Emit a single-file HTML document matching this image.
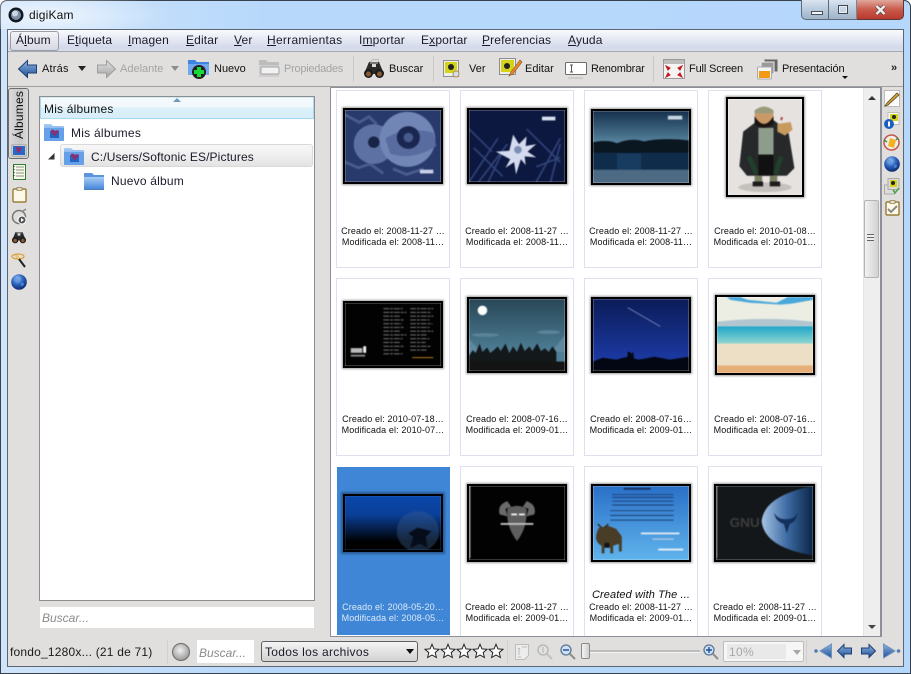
<!DOCTYPE html>
<html><head><meta charset="utf-8"><style>
html,body{margin:0;padding:0;background:#fff}
#w{position:relative;width:911px;height:674px;overflow:hidden;font-family:"Liberation Sans",sans-serif;color:#111;background:linear-gradient(90deg,#cfe4fa 0,#b7d8fb 30%,#b5d7fb 100%);border-radius:7px 7px 0 0;box-shadow:inset 0 0 0 1px #39424c}
.a{position:absolute}
.t{position:absolute;white-space:nowrap}
.m{font-size:12px;top:33px;letter-spacing:.15px;color:#1b1b2a}
.b{font-size:11px;top:63px;letter-spacing:0;color:#111}
.g{color:#a4a4a4}
.sep{position:absolute;width:1px;background:#cbc8c4}
.c{position:absolute;width:112px;background:#fff;border:1px solid #dfdfef}
.th{position:absolute;box-sizing:border-box;border:2px solid #000;box-shadow:0 0 2px 1px #a0a0a0;overflow:hidden}
.th svg{display:block;width:100%;height:100%;filter:blur(.6px)}
.l{position:absolute;width:114px;text-align:center;font-size:9px;line-height:11px;white-space:nowrap;color:#111;letter-spacing:.12px}
svg.i{position:absolute;overflow:visible}
</style></head><body><div id="w">
<svg width="0" height="0" style="position:absolute"><defs>
<linearGradient id="fb" x1="0" y1="0" x2="0" y2="1"><stop offset="0" stop-color="#a9cdf5"/><stop offset="1" stop-color="#3f82d8"/></linearGradient>
<linearGradient id="fg" x1="0" y1="0" x2="0" y2="1"><stop offset="0" stop-color="#e2e2e2"/><stop offset="1" stop-color="#a5a5a5"/></linearGradient>
<linearGradient id="nb" x1="0" y1="0" x2="0" y2="1"><stop offset="0" stop-color="#8fb4e0"/><stop offset="1" stop-color="#1e4f98"/></linearGradient>
<radialGradient id="gl" cx=".4" cy=".3" r=".7"><stop offset="0" stop-color="#a6cbf5"/><stop offset=".5" stop-color="#2c66c0"/><stop offset="1" stop-color="#0b2a70"/></radialGradient>
<radialGradient id="bl" cx=".45" cy=".4" r=".65"><stop offset="0" stop-color="#f1f1f1"/><stop offset="1" stop-color="#909090"/></radialGradient>
<symbol id="folderp" viewBox="0 0 22 20"><path d="M1 2h7l2 2h10q1 0 1 1v13q0 1-1 1H2q-1 0-1-1z" fill="url(#fb)"/><path d="M1 6h20v12q0 1-1 1H2q-1 0-1-1z" fill="#66a0e8"/><path d="M7 9h9v7H7z" fill="#1f65c4"/><path d="M8 8c2-1 3 0 4 1 1-1 3-1 4 0-1 2-3 3-4 6-1-2-4-3-4-7z" fill="#8c2f6f"/></symbol>
<symbol id="gstar" viewBox="0 0 16 16"><path d="M8 1.300l2 4.600 5 .4-3.800 3.300 1.200 4.900L8 11.900 3.600 14.500l1.200-4.900L1 6.300l5-.4z" fill="#fff" stroke="#222" stroke-width="1"/></symbol>
<symbol id="bino" viewBox="0 0 22 20"><path d="M6 3h3v5h4V3h3l5 12H1z" fill="#2a2a2a"/><circle cx="5.500" cy="14.500" r="4.500" fill="#1c1c1c"/><circle cx="16.500" cy="14.500" r="4.500" fill="#1c1c1c"/><circle cx="5.500" cy="15" r="2.500" fill="#8a5a30"/><circle cx="16.500" cy="15" r="2.500" fill="#8a5a30"/><path d="M7 3h8v2H7z" fill="#777"/></symbol>
<symbol id="globe" viewBox="0 0 16 16"><circle cx="8" cy="8" r="7.800" fill="url(#gl)"/><path d="M4 4c2-1 4 0 4 2S5 8 4 7zM10 9c2-1 3 0 3 1s-2 3-3 2z" fill="#5f93db" opacity=".7"/></symbol>
</defs></svg>

<!-- title bar -->
<div class="a" style="left:0;top:0;width:300px;height:29px;background:radial-gradient(ellipse 120px 26px at 50px 16px,rgba(255,255,255,.65),rgba(255,255,255,0))"></div>
<svg class="i" style="left:8px;top:7px" width="16" height="16"><circle cx="8" cy="8" r="7.500" fill="#12181f"/><circle cx="8" cy="8" r="5" fill="#7d8fa6"/><circle cx="7" cy="6.500" r="3" fill="#c9d6e6"/></svg>
<div class="t" style="left:29px;top:8px;font-size:12px;letter-spacing:.2px;color:#111">digiKam</div>
<!-- window buttons -->
<div class="a" style="left:801px;top:0;width:28px;height:20px;box-sizing:border-box;border:1px solid #5e6a78;border-top:0;border-radius:0 0 0 5px;background:linear-gradient(#d9e4f0,#b9cadc 50%,#9fb2c7)"></div>
<div class="a" style="left:811px;top:11px;width:10px;height:2px;background:#f4f6f8;border:1px solid #47505c"></div>
<div class="a" style="left:829px;top:0;width:28px;height:20px;box-sizing:border-box;border-bottom:1px solid #5e6a78;border-right:1px solid #7a8694;background:linear-gradient(#d9e4f0,#b9cadc 50%,#9fb2c7)"></div>
<div class="a" style="left:838px;top:5px;width:8px;height:7px;border:1px solid #3f4752;background:#c9d6e3;box-shadow:inset 0 0 0 1px #e8eef4"></div>
<div class="a" style="left:857px;top:0;width:47px;height:20px;box-sizing:border-box;border:1px solid #5b3a36;border-top:0;border-left:0;border-radius:0 0 5px 0;background:linear-gradient(#dfa89d,#c95a4c 50%,#b83a2d)"></div>
<svg class="i" style="left:875px;top:5px" width="11" height="10"><path d="M1.500 1l8 8M9.500 1l-8 8" stroke="#5a4442" stroke-width="3.800"/><path d="M1.500 1l8 8M9.500 1l-8 8" stroke="#f0f0f0" stroke-width="2.400"/></svg>

<!-- client -->
<div class="a" style="left:7px;top:29px;width:897px;height:638px;background:#e0dfdd;border:1px solid #5b6670;box-sizing:border-box"></div>
<div class="a" style="left:8px;top:30px;width:895px;height:21px;background:linear-gradient(#f9fafd,#d3d9ea 85%,#d9deeb);border-bottom:1px solid #a4a8b2"></div>
<div class="a" style="left:10px;top:31px;width:47px;height:18px;border:1px solid #9a9ca8;border-radius:3px;background:linear-gradient(#f3f4f8,#d6d8e2)"></div>
<div class="t m" style="left:16px">Á<u>l</u>bum</div>
<div class="t m" style="left:67px">E<u>t</u>iqueta</div>
<div class="t m" style="left:128px"><u>I</u>magen</div>
<div class="t m" style="left:186px"><u>E</u>ditar</div>
<div class="t m" style="left:234px"><u>V</u>er</div>
<div class="t m" style="left:267px;letter-spacing:.28px"><u>H</u>erramientas</div>
<div class="t m" style="left:359px">I<u>m</u>portar</div>
<div class="t m" style="left:421px">E<u>x</u>portar</div>
<div class="t m" style="left:482px"><u>P</u>referencias</div>
<div class="t m" style="left:568px"><u>A</u>yuda</div>

<!-- toolbar -->
<div class="a" style="left:8px;top:86px;width:895px;height:1px;background:#9f9f9f"></div>
<svg class="i" style="left:18px;top:60px" width="20" height="18"><path d="M9.500.5v4.500h9v8h-9v4.500L.5 9z" fill="url(#nb)" stroke="#1e3f73"/></svg>
<div class="t b" style="left:42px;letter-spacing:.2px">Atrás</div>
<svg class="i" style="left:78px;top:66px" width="8" height="5"><path d="M0 0h8L4 5z" fill="#222"/></svg>
<svg class="i" style="left:96px;top:60px" width="20" height="18"><path d="M10.500.5v4.500h-9v8h9v4.500l9-8.500z" fill="url(#fg)" stroke="#9c9c9c"/></svg>
<div class="t b g" style="left:120px">Adelante</div>
<svg class="i" style="left:171px;top:66px" width="8" height="5"><path d="M0 0h8L4 5z" fill="#8d8d8d"/></svg>
<svg class="i" style="left:188px;top:59px" width="22" height="20"><path d="M0 1h7l2 2h12v13H0z" fill="#3f84e0"/><path d="M0 5h21v11H0z" fill="#6fa8ef"/><circle cx="11" cy="13" r="7" fill="#222"/><path d="M9 8h4v3h3v4h-3v3H9v-3H6v-4h3z" fill="#19d936"/></svg>
<div class="t b" style="left:214px">Nuevo</div>
<svg class="i" style="left:258px;top:59px" width="22" height="20"><path d="M1 1h7l2 2h11v15H1z" fill="#bdbdbd"/><path d="M1 6h20v12H1z" fill="#cfcfcf"/><rect x="3" y="8" width="18" height="7" rx="1" fill="#f2f2f2" stroke="#a3a3a3"/></svg>
<div class="t b g" style="left:284px;letter-spacing:-.25px">Propiedades</div>
<div class="sep" style="left:353px;top:56px;height:26px"></div>
<svg class="i" style="left:363px;top:59px" width="22" height="20"><path d="M9 1l2-1 2 1 2-1 1 3-2 2H9L7 3z" fill="#dcdcdc" stroke="#aaa" stroke-width=".6"/><use href="#bino"/></svg>
<div class="t b" style="left:389px">Buscar</div>
<div class="sep" style="left:433px;top:56px;height:26px"></div>
<svg class="i" style="left:443px;top:60px" width="17" height="18"><rect x=".5" y=".5" width="15" height="16" fill="#eee" stroke="#8e8e8e"/><rect x="2" y="2" width="12" height="11" fill="#d6d21a"/><circle cx="8" cy="7" r="3" fill="#222"/><circle cx="13" cy="14" r="3" fill="#cfe0ee" stroke="#b78f52"/></svg>
<div class="t b" style="left:469px">Ver</div>
<svg class="i" style="left:499px;top:58px" width="22" height="20"><rect x=".5" y=".5" width="16" height="16" fill="#eee" stroke="#8e8e8e"/><rect x="2" y="2" width="13" height="12" fill="#d6d21a"/><circle cx="8" cy="8" r="3" fill="#222"/><path d="M21 2l-9 12-2 4 4-2 9-12z" fill="#e5872b" stroke="#8a4f18" stroke-width=".6"/></svg>
<div class="t b" style="left:525px">Editar</div>
<svg class="i" style="left:565px;top:62px" width="22" height="18"><rect x=".5" y=".5" width="21" height="12" rx="1" fill="#fff" stroke="#6c6c6c"/><path d="M5 3h3M6.500 3v7M5 10h3" stroke="#555" fill="none"/><path d="M3 16h15" stroke="#b8b8b8"/></svg>
<div class="t b" style="left:591px;letter-spacing:-.15px">Renombrar</div>
<div class="sep" style="left:653px;top:56px;height:26px"></div>
<svg class="i" style="left:663px;top:59px" width="22" height="20"><rect x=".5" y=".5" width="21" height="19" fill="#f4f4f4" stroke="#999"/><rect x="1" y="1" width="20" height="4" fill="#bdbdbd"/><path d="M3 7l4 2-2 2zM19 7l-4 2 2 2zM3 18l4-2-2-2zM19 18l-4-2 2-2z" fill="#c8181c" stroke="#c8181c"/></svg>
<div class="t b" style="left:689px;letter-spacing:-.15px">Full Screen</div>
<svg class="i" style="left:757px;top:58px" width="22" height="22"><rect x="7" y="1" width="14" height="13" fill="#666" stroke="#ddd"/><rect x="4" y="4" width="13" height="12" fill="#9a9a9a" stroke="#eee"/><rect x=".5" y="9" width="14" height="12" rx="1" fill="#f4f4f4" stroke="#aaa"/><rect x="2" y="13" width="11" height="7" fill="#f29a14"/></svg>
<div class="t b" style="left:782px;letter-spacing:-.15px">Presentación</div>
<svg class="i" style="left:842px;top:76px" width="6" height="4"><path d="M0 0h6L3 3z" fill="#111"/></svg>
<div class="t" style="left:891px;top:62px;font-size:11px;font-weight:bold;color:#222">»</div>

<!-- left tabs -->
<div class="a" style="left:8px;top:88px;width:21px;height:71px;box-sizing:border-box;border:1px solid #6d6d6d;border-radius:3px;background:linear-gradient(90deg,#d9d9d9,#c8c8c8 60%,#dbdbdb)"></div>
<div class="t" style="left:-8px;top:108px;width:54px;transform:rotate(-90deg);font-size:12px;letter-spacing:.2px;text-align:center;height:14px;line-height:14px">Álbumes</div>
<svg class="i" style="left:12px;top:145px" width="14" height="11"><rect width="14" height="11" fill="#fff" stroke="#999"/><rect x="1" y="1" width="12" height="9" fill="#2669c7"/><path d="M4 2c2-1 3 0 3 1 1-1 3-1 3 0-1 2-2 3-3 6-1-2-3-3-3-7z" fill="#8c2f6f"/></svg>
<svg class="i" style="left:13px;top:164px" width="13" height="16"><rect x=".5" y=".5" width="12" height="15" fill="#f9fbe8" stroke="#2f7a38"/><path d="M3 3h8M3 6h8M3 9h8M3 12h8" stroke="#8d8d8d"/><path d="M1 2v12" stroke="#222" stroke-dasharray="1 2"/></svg>
<svg class="i" style="left:12px;top:187px" width="15" height="16"><rect x="1" y="2" width="13" height="13" rx="1" fill="#fdf9e8" stroke="#8a6a18" stroke-width="1.200"/><rect x="5" y=".5" width="5" height="3" fill="#ddd" stroke="#8a6a18" stroke-width=".6"/></svg>
<svg class="i" style="left:11px;top:208px" width="17" height="17"><circle cx="8" cy="9" r="6.500" fill="#ddd" stroke="#777" stroke-width="1.500"/><circle cx="11" cy="12" r="4" fill="#555" stroke="#fff"/><path d="M10 10l3 2-3 2z" fill="#fff"/><path d="M12 3l3-2" stroke="#888" stroke-width="1.500"/></svg>
<svg class="i" style="left:11px;top:230px" width="16" height="14"><use href="#bino"/></svg>
<svg class="i" style="left:11px;top:252px" width="16" height="16"><ellipse cx="7" cy="4.500" rx="6" ry="2.500" fill="none" stroke="#e59b2a" stroke-width="1.200"/><path d="M5 3l9 12" stroke="#222" stroke-width="2"/><path d="M5 3l3 4" stroke="#f1ca6a" stroke-width="2"/></svg>
<svg class="i" style="left:11px;top:274px" width="16" height="16"><use href="#globe"/></svg>

<!-- album tree -->
<div class="a" style="left:39px;top:96px;width:276px;height:505px;box-sizing:border-box;border:1px solid #8d8d8d;background:#fff"></div>
<div class="a" style="left:40px;top:97px;width:274px;height:22px;box-sizing:border-box;border:1px solid #a8d9f2;border-top:1px solid #cfe9f6;background:linear-gradient(#f4f9fc 0,#f1f8fb 45%,#dcf0f9 50%,#d8edf8 100%)"></div>
<svg class="i" style="left:173px;top:98px" width="8" height="4"><path d="M0 4L4 0l4 4z" fill="#6f9bbb"/></svg>
<div class="t" style="left:44px;top:102px;font-size:12px;letter-spacing:.2px">Mis álbumes</div>
<svg class="i" style="left:43px;top:122px" width="22" height="20"><use href="#folderp"/></svg>
<div class="t" style="left:71px;top:126px;font-size:12px;letter-spacing:.25px;color:#1a1a2a">Mis álbumes</div>
<div class="a" style="left:60px;top:144px;width:253px;height:23px;box-sizing:border-box;border:1px solid #d9d9d9;border-radius:3px;background:linear-gradient(#f8f8f8,#e4e4e4)"></div>
<svg class="i" style="left:48px;top:153px" width="7" height="7"><path d="M6.500 0v6.500H0z" fill="#333"/></svg>
<svg class="i" style="left:63px;top:146px" width="22" height="20"><use href="#folderp"/></svg>
<div class="t" style="left:91px;top:150px;font-size:12px;letter-spacing:.12px;color:#1a1a2a">C:/Users/Softonic ES/Pictures</div>
<svg class="i" style="left:83px;top:172px" width="22" height="19"><path d="M1 1h8l2 2h10v15H1z" fill="#5d95dd"/><path d="M1 5h20v13H1z" fill="url(#fb)"/><path d="M1 17.500h20" stroke="#4d7eb8"/></svg>
<div class="t" style="left:111px;top:174px;font-size:12px;letter-spacing:.2px;color:#1a1a2a">Nuevo álbum</div>
<div class="a" style="left:40px;top:607px;width:274px;height:21px;background:#fff"></div>
<div class="t" style="left:42px;top:611px;font-size:12px;font-style:italic;color:#8b8b8b">Buscar...</div>

<!-- grid -->
<div class="a" style="left:330px;top:87px;width:551px;height:550px;box-sizing:border-box;border:1px solid #8d8f99;background:#fff"></div>

<!-- row 1 -->
<div class="c" style="left:336px;top:90px;height:176px"></div>
<div class="c" style="left:460px;top:90px;height:176px"></div>
<div class="c" style="left:584px;top:90px;height:176px"></div>
<div class="c" style="left:708px;top:90px;height:176px"></div>
<!-- row 2 -->
<div class="c" style="left:336px;top:278px;height:176px"></div>
<div class="c" style="left:460px;top:278px;height:176px"></div>
<div class="c" style="left:584px;top:278px;height:176px"></div>
<div class="c" style="left:708px;top:278px;height:176px"></div>
<!-- row 3 -->
<div class="a" style="left:337px;top:467px;width:113px;height:168px;background:#3f87d6"></div>
<div class="c" style="left:460px;top:466px;height:169px;border-bottom:0"></div>
<div class="c" style="left:584px;top:466px;height:169px;border-bottom:0"></div>
<div class="c" style="left:708px;top:466px;height:169px;border-bottom:0"></div>

<!-- thumbs -->
<div class="th" style="left:343px;top:108px;width:100px;height:76px"><svg viewBox="0 0 100 76" preserveAspectRatio="none"><rect width="100" height="76" fill="#28396c"/><path d="M0 5l15 8 10-6 8 8M0 55l14 6 12-4 14 10M50 62l14 6 18-6" stroke="#4a5c8e" stroke-width="3" fill="none"/><circle cx="30" cy="36" r="21" fill="#5d71a3"/><circle cx="65" cy="31" r="29" fill="#7286b6"/><path d="M42 30q22-14 50-6l3 14q-24 16-48 8z" fill="#586c9f"/><circle cx="30" cy="34" r="6" fill="#182345"/><circle cx="66" cy="29" r="12" fill="#1a2750"/><circle cx="66" cy="29" r="5" fill="#475a8c"/><rect x="78" y="63" width="14" height="4" fill="#c8d0e6"/></svg></div>
<div class="th" style="left:467px;top:108px;width:100px;height:76px"><svg viewBox="0 0 100 76" preserveAspectRatio="none"><rect width="100" height="76" fill="#0d1840"/><path d="M0 76L30 30M10 76l30-40M20 76l14-30M70 76L95 30M85 76l10-40M5 40l30 30M60 20l35 35M70 60l25-10M0 20l24 24" stroke="#2f4278" stroke-width="1.800"/><path d="M46 26l6 10 8-8-1 10 11-2-9 8 9 6-12-1 1 9-5-6-5 16-2-13-9 6 5-9-15-8 14-1z" fill="#d4dbee"/><circle cx="51" cy="42" r="4" fill="#7c8eb6"/><rect x="76" y="7" width="14" height="4" fill="#d8dff0"/></svg></div>
<div class="th" style="left:591px;top:109px;width:100px;height:76px"><svg viewBox="0 0 100 76" preserveAspectRatio="none"><defs><linearGradient id="s3" x1="0" y1="0" x2="0" y2="1"><stop offset="0" stop-color="#15304d"/><stop offset="1" stop-color="#5b8aa4"/></linearGradient></defs><rect width="100" height="36" fill="url(#s3)"/><path d="M0 33q15-3 25 1 15-6 28-2 20-4 47-1v15H0z" fill="#0a1620"/><rect y="44" width="100" height="20" fill="#0f2d4a"/><rect x="25" y="45" width="25" height="18" fill="#1a4064" opacity=".8"/><rect y="62" width="100" height="14" fill="#4c6a84"/><rect x="78" y="5" width="15" height="4" fill="#c7d6e2"/></svg></div>
<div class="th" style="left:726px;top:97px;width:78px;height:100px"><svg viewBox="0 0 78 100" preserveAspectRatio="none"><rect width="78" height="100" fill="#e6e2e0"/><ellipse cx="39" cy="92" rx="28" ry="5" fill="#c4c0bc"/><path d="M24 28l8-6h16l8 6 8 8 6 36-8 8H20l-8-10 4-36z" fill="#26282a"/><rect x="32" y="30" width="16" height="28" fill="#8e9c8c"/><path d="M32 58h16v22H32z" fill="#111"/><path d="M22 60l8 18M56 60l-6 18" stroke="#20402c" stroke-width="5"/><path d="M28 80h8v8h-8zM44 80h8v8h-8z" fill="#777e60"/><path d="M26 86h11v5H26zM44 86h11v5H44z" fill="#1c1c1c"/><circle cx="38" cy="18" r="10" fill="#c99a68"/><path d="M28 18q10 16 20 0v8q-10 8-20 0z" fill="#1a1412"/><path d="M28 12q10-8 20 0v3H28z" fill="#999c7c"/><path d="M52 26l14-2 2 8-8 6-8-4z" fill="#c79a5e"/><path d="M56 22l1-3" stroke="#b03a44" stroke-width="2"/></svg></div>

<div class="th" style="left:343px;top:301px;width:100px;height:67px"><svg viewBox="0 0 100 67" preserveAspectRatio="none"><rect width="100" height="67" fill="#020202"/><g stroke="#696969" stroke-width="1.200" stroke-dasharray="6 1 3 1"><path d="M40 6h20M40 10h24M40 14h18M40 18h22M40 22h19M40 26h22M40 30h18M40 34h24M40 38h20M40 42h18M40 46h21M40 50h16M40 54h20"/><path d="M68 6h24M68 10h22M68 14h24M68 18h20M68 22h23M68 26h20M68 30h24M68 34h18M68 38h20M68 42h16M68 46h22M68 50h18"/></g><path d="M70 58h22" stroke="#a06a20" stroke-width="1.200"/><rect x="19" y="46" width="3" height="7" fill="#f4f4f4"/><rect x="6" y="48" width="12" height="5" fill="#bbb"/><rect x="6" y="55" width="15" height="2" fill="#888"/></svg></div>
<div class="th" style="left:467px;top:297px;width:100px;height:76px"><svg viewBox="0 0 100 76" preserveAspectRatio="none"><defs><linearGradient id="s6" x1="0" y1="0" x2="0" y2="1"><stop offset="0" stop-color="#284757"/><stop offset=".75" stop-color="#4f7f97"/></linearGradient></defs><rect width="100" height="76" fill="url(#s6)"/><circle cx="14" cy="12" r="5" fill="#fff"/><ellipse cx="17" cy="38" rx="14" ry="2" fill="#5b8298"/><ellipse cx="83" cy="35" rx="12" ry="2" fill="#5b8298"/><path d="M0 42l12 14H0zM100 38L86 56h14z" fill="#6c95aa" opacity=".6"/><path d="M0 60l4-6 3 3 4-10 3 9 5-5 3 6 4-3 4-4 3 5 5-8 4 10 4-7 4 6 4-10 4 9 5-5 3 5 5-8 4 8 4-3 4 4 4-6 4 6v14H0z" fill="#13181a"/><rect y="66" width="100" height="10" fill="#141414"/></svg></div>
<div class="th" style="left:591px;top:297px;width:100px;height:76px"><svg viewBox="0 0 100 76" preserveAspectRatio="none"><defs><linearGradient id="s7" x1="0" y1="0" x2="0" y2="1"><stop offset="0" stop-color="#0b1c58"/><stop offset="1" stop-color="#1f3fb0"/></linearGradient></defs><rect width="100" height="76" fill="url(#s7)"/><path d="M36 9l34 20" stroke="#8a97c8" stroke-width=".8"/><path d="M0 66l10-4 14 2 12-3 12 3 16-3 16 3 20-3v15H0z" fill="#030714"/><path d="M36 66V56h3l1 2 2-2 1 10z" fill="#030714"/></svg></div>
<div class="th" style="left:715px;top:295px;width:100px;height:80px"><svg viewBox="0 0 100 80" preserveAspectRatio="none"><defs><linearGradient id="s8" x1="0" y1="0" x2="0" y2="1"><stop offset="0" stop-color="#1ea7c8"/><stop offset="1" stop-color="#8fd5d0"/></linearGradient></defs><rect width="100" height="32" fill="#eceee4"/><path d="M10 0h14l8 3 30 3 12-6h26v3l-22 4-12 1-32-2-20-3z" fill="#4aa8da"/><path d="M0 26q50-6 100 0v6H0z" fill="#b2c6d0"/><rect y="31" width="100" height="18" fill="url(#s8)"/><rect y="49" width="100" height="23" fill="#ecdfc6"/><rect y="72" width="100" height="8" fill="#e6ae78"/></svg></div>

<div class="th" style="left:343px;top:494px;width:100px;height:58px;box-shadow:0 0 2px 2px #2a5a96"><svg viewBox="0 0 100 58" preserveAspectRatio="none"><defs><linearGradient id="s9" x1="0" y1="0" x2="0" y2="1"><stop offset="0" stop-color="#0a48ac"/><stop offset=".35" stop-color="#0a3f98"/><stop offset=".85" stop-color="#000"/></linearGradient></defs><rect width="100" height="58" fill="url(#s9)"/><circle cx="76" cy="38" r="22" fill="#3a5c8c" opacity=".4"/><path d="M76 34l-10 6 5 4-3 12 10-5 8 5-2-12 6-6z" fill="#050c1a"/></svg></div>
<div class="th" style="left:467px;top:484px;width:100px;height:78px"><svg viewBox="0 0 100 78" preserveAspectRatio="none"><rect width="100" height="78" fill="#020202"/><path d="M1 0v76" stroke="#bbb"/><path d="M32 30q-3-10 8-14l4 6-6 2 2 8zM68 30q3-10-8-14l-4 6 6 2-2 8z" fill="#6a6a6a"/><path d="M40 24q10-6 20 0 1 20-10 34-12-16-10-34z" fill="#5e5e5e"/><rect x="33" y="39" width="34" height="2" fill="#bfbfbf"/><path d="M44 30h6M52 30h6" stroke="#eee" stroke-width="2"/></svg></div>
<div class="th" style="left:591px;top:484px;width:100px;height:78px"><svg viewBox="0 0 100 78" preserveAspectRatio="none"><defs><linearGradient id="s11" x1="0" y1="0" x2="0" y2="1"><stop offset="0" stop-color="#2a70c8"/><stop offset="1" stop-color="#60b4ec"/></linearGradient></defs><rect width="100" height="78" fill="url(#s11)"/><path d="M32 3h28" stroke="#12315e" stroke-width="2"/><g stroke="#1b3e74" stroke-width="1"><path d="M20 9h64M20 12h64M20 16h64M20 20h64M18 26h66M18 31h66M18 36h66"/></g><path d="M50 50h40" stroke="#dce8f5" stroke-width="2"/><path d="M62 56h22" stroke="#a8c4e0" stroke-width="1.500"/><path d="M68 67h26" stroke="#e6f0fa" stroke-width="2"/><path d="M6 44l10-2 8 3 6 8v16h-3v-8l-6 2v8h-3v-6l-6 0v6h-3v-8q-8-4-5-14z" fill="#4a3d28"/><path d="M5 40l4 4M16 40l-4 4" stroke="#302818" stroke-width="1.500"/><rect x="12" y="60" width="5" height="5" fill="#111"/></svg></div>
<div class="th" style="left:714px;top:484px;width:101px;height:78px"><svg viewBox="0 0 100 78" preserveAspectRatio="none"><defs><linearGradient id="s12" x1="0" y1="0" x2="1" y2="0"><stop offset="0" stop-color="#a6c3e4"/><stop offset=".5" stop-color="#3c6aa2"/><stop offset="1" stop-color="#0b2548"/></linearGradient></defs><rect width="100" height="78" fill="#14171a"/><path d="M1 0v76" stroke="#888"/><path d="M100 0v73q-50-8-53-36Q50 10 100 0z" fill="url(#s12)"/><path d="M60 28q3 7 12 7 9 0 12-7-1 10-8 12l-3 10-3-10q-9-3-10-12z" fill="#14305c"/><text x="14" y="43" font-family="Liberation Sans,sans-serif" font-size="14" font-weight="bold" fill="#3c3c3c">GNU</text></svg></div>

<!-- labels -->
<div class="l" style="left:336px;top:226px">Creado el: 2008-11-27 …<br>Modificada el: 2008-11…</div>
<div class="l" style="left:460px;top:226px">Creado el: 2008-11-27 …<br>Modificada el: 2008-11…</div>
<div class="l" style="left:584px;top:226px">Creado el: 2008-11-27 …<br>Modificada el: 2008-11…</div>
<div class="l" style="left:708px;top:226px">Creado el: 2010-01-08…<br>Modificada el: 2010-01…</div>
<div class="l" style="left:336px;top:414px">Creado el: 2010-07-18…<br>Modificada el: 2010-07…</div>
<div class="l" style="left:460px;top:414px">Creado el: 2008-07-16…<br>Modificada el: 2009-01…</div>
<div class="l" style="left:584px;top:414px">Creado el: 2008-07-16…<br>Modificada el: 2009-01…</div>
<div class="l" style="left:708px;top:414px">Creado el: 2008-07-16…<br>Modificada el: 2009-01…</div>
<div class="l" style="left:336px;top:602px;color:#dbe9f8">Creado el: 2008-05-20…<br>Modificada el: 2008-05…</div>
<div class="l" style="left:460px;top:602px">Creado el: 2008-11-27 …<br>Modificada el: 2009-01…</div>
<div class="l" style="left:584px;top:602px">Creado el: 2008-11-27 …<br>Modificada el: 2009-01…</div>
<div class="l" style="left:708px;top:602px">Creado el: 2008-11-27 …<br>Modificada el: 2009-01…</div>
<div class="l" style="left:584px;top:589px;font-size:11px;font-style:italic;line-height:13px;letter-spacing:.1px">Created with The ...</div>

<!-- scrollbar -->
<div class="a" style="left:863px;top:88px;width:17px;height:548px;background:#eeeeee;border-left:1px solid #e4e4e4;box-sizing:border-box"></div>
<svg class="i" style="left:868px;top:96px" width="8" height="4"><path d="M0 4L4 0l4 4z" fill="#333"/></svg>
<svg class="i" style="left:868px;top:625px" width="8" height="4"><path d="M0 0h8L4 4z" fill="#444"/></svg>
<div class="a" style="left:864px;top:200px;width:15px;height:78px;box-sizing:border-box;border:1px solid #b4b4b4;border-radius:2px;background:linear-gradient(90deg,#f1f1f1,#e2e2e2 50%,#d2d2d2)"></div>
<div class="a" style="left:867px;top:234px;width:7px;height:7px;background:repeating-linear-gradient(#666 0 1px,#eee 1px 3px)"></div>

<!-- right strip -->
<div class="a" style="left:881px;top:87px;width:1px;height:550px;background:#8d8f99"></div>
<svg class="i" style="left:884px;top:90px" width="16" height="17"><path d="M.5.5h15v16H.5z" fill="#fdfdfd" stroke="#bbb"/><path d="M13 3L3 13l-2 3 3-1L15 5z" fill="#d5a33a" stroke="#5a4a20" stroke-width=".8"/></svg>
<svg class="i" style="left:884px;top:112px" width="16" height="17"><rect x="4" y=".5" width="11" height="12" fill="#fff" stroke="#bbb"/><rect x="6" y="2" width="8" height="7" fill="#d6d21a"/><circle cx="10" cy="5" r="2" fill="#222"/><circle cx="5" cy="12" r="5" fill="#1d5ec4"/><rect x="4" y="9.500" width="2" height="5" fill="#fff"/></svg>
<svg class="i" style="left:883px;top:134px" width="17" height="17"><circle cx="8.500" cy="8.500" r="7.500" fill="#f0eee8" stroke="#c0554e" stroke-width="1.500"/><path d="M7 4l6 2-2 8-6-2z" fill="#f4b223"/><path d="M1 6l3 2M15 4l-2 2" stroke="#2d9a3c" stroke-width="1.500"/></svg>
<svg class="i" style="left:884px;top:156px" width="16" height="16"><use href="#globe"/></svg>
<svg class="i" style="left:884px;top:178px" width="16" height="17"><rect x=".5" y="7" width="10" height="9" fill="#ddd" stroke="#aaa"/><rect x="4" y=".5" width="11" height="11" fill="#d9d9d9" stroke="#aaa"/><rect x="6" y="2" width="7" height="7" fill="#d6d21a"/><circle cx="9" cy="5" r="2" fill="#222"/><path d="M9 12l2 3 4-5" stroke="#4aa345" fill="none" stroke-width="1.500"/></svg>
<svg class="i" style="left:885px;top:200px" width="15" height="16"><rect x="1" y="2" width="13" height="13" rx="1" fill="#fdf9e8" stroke="#8a6a18" stroke-width="1.200"/><rect x="5" y=".5" width="5" height="3" fill="#ddd" stroke="#8a6a18" stroke-width=".6"/><path d="M3 9l3 3 6-6" stroke="#888" fill="none" stroke-width="2"/></svg>

<!-- status bar -->
<div class="t" style="left:10px;top:645px;font-size:12px;letter-spacing:.2px;color:#1a1a1a">fondo_1280x... (21 de 71)</div>
<div class="sep" style="left:167px;top:640px;height:24px;background:#d2d0cd"></div>
<svg class="i" style="left:172px;top:643px" width="18" height="18"><circle cx="9" cy="9" r="8.500" fill="url(#bl)" stroke="#6b6b6b"/></svg>
<div class="a" style="left:197px;top:640px;width:57px;height:23px;background:#fff"></div>
<div class="t" style="left:199px;top:646px;font-size:12px;font-style:italic;color:#8b8b8b">Buscar...</div>
<div class="a" style="left:261px;top:641px;width:157px;height:21px;box-sizing:border-box;border:1px solid #5f5f5f;border-radius:3px;background:linear-gradient(#f4f4f4,#d2d2d2)"></div>
<div class="t" style="left:265px;top:645px;font-size:12px;letter-spacing:.3px;color:#1a1a2a">Todos los archivos</div>
<svg class="i" style="left:406px;top:649px" width="8" height="5"><path d="M0 0h8L4 5z" fill="#111"/></svg>
<svg class="i" style="left:424px;top:643px" width="16" height="16"><use href="#gstar"/></svg>
<svg class="i" style="left:440px;top:643px" width="16" height="16"><use href="#gstar"/></svg>
<svg class="i" style="left:456px;top:643px" width="16" height="16"><use href="#gstar"/></svg>
<svg class="i" style="left:472px;top:643px" width="16" height="16"><use href="#gstar"/></svg>
<svg class="i" style="left:488px;top:643px" width="16" height="16"><use href="#gstar"/></svg>
<div class="sep" style="left:507px;top:640px;height:24px;background:#d2d0cd"></div>
<svg class="i" style="left:515px;top:644px" width="15" height="17"><path d="M.5.5h13v11l-4 4H.5z" fill="#ececec" stroke="#bdbdbd"/><path d="M4 4v7M4 4l-1 1M4 4l1 1M7 3h5M3 13h3" stroke="#bdbdbd" fill="none"/></svg>
<svg class="i" style="left:537px;top:644px" width="16" height="16"><circle cx="6" cy="6" r="5" fill="#e2e2e2" stroke="#b3b3b3" stroke-width="1.300"/><path d="M10 10l5 5" stroke="#c2c2c2" stroke-width="2"/><path d="M6 3v6" stroke="#b3b3b3"/></svg>
<svg class="i" style="left:560px;top:644px" width="16" height="16"><circle cx="6" cy="6" r="5" fill="#cfe0f4" stroke="#5a7894" stroke-width="1.300"/><path d="M10 10l5 5" stroke="#8c8c8c" stroke-width="2"/><path d="M3 6h6" stroke="#1d4fa0" stroke-width="1.400"/></svg>
<div class="a" style="left:589px;top:650px;width:111px;height:2px;background:#bdbdbd;border-bottom:1px solid #f4f4f4"></div>
<div class="a" style="left:581px;top:643px;width:9px;height:16px;box-sizing:border-box;border:1px solid #8a8a8a;border-radius:2px;background:linear-gradient(90deg,#f4f4f4,#cfcfcf)"></div>
<svg class="i" style="left:703px;top:644px" width="16" height="16"><circle cx="6" cy="6" r="5" fill="#cfe0f4" stroke="#5a7894" stroke-width="1.300"/><path d="M10 10l5 5" stroke="#8c8c8c" stroke-width="2"/><path d="M3 6h6M6 3v6" stroke="#1d4fa0" stroke-width="1.400"/></svg>
<div class="a" style="left:723px;top:641px;width:81px;height:21px;box-sizing:border-box;border:1px solid #bdbdbd;border-radius:2px;background:#f6f6f6"></div>
<div class="a" style="left:727px;top:644px;width:59px;height:15px;background:#e9e9e9"></div>
<div class="t" style="left:729px;top:645px;font-size:12px;letter-spacing:.3px;color:#a8a8a8">10%</div>
<svg class="i" style="left:793px;top:650px" width="8" height="5"><path d="M0 0h8L4 5z" fill="#a8a8a8"/></svg>
<div class="sep" style="left:806px;top:640px;height:24px;background:#d2d0cd"></div>
<svg class="i" style="left:814px;top:643px" width="18" height="16"><circle cx="2" cy="8" r="1.800" fill="#4f7cb5"/><path d="M17.500 1v14L6 8z" fill="url(#nb)" stroke="#6f93bf"/></svg>
<svg class="i" style="left:837px;top:644px" width="15" height="14"><path d="M7 .5v3.500h7.500v6H7v3.500L.5 7z" fill="url(#nb)" stroke="#1e3f73"/></svg>
<svg class="i" style="left:861px;top:644px" width="15" height="14"><path d="M8 .5v3.500H.5v6H8v3.500L14.500 7z" fill="url(#nb)" stroke="#1e3f73"/></svg>
<svg class="i" style="left:883px;top:643px" width="18" height="16"><circle cx="15.500" cy="8" r="1.800" fill="#4f7cb5"/><path d="M.5 1v14L12 8z" fill="url(#nb)" stroke="#6f93bf"/></svg>
</div></body></html>
